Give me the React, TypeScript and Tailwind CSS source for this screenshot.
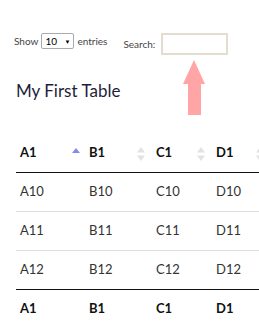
const cols = [
  { key: "A", w: "w-[69px]", sort: "asc", label: true },
  { key: "B", w: "w-[67px]", sort: "both", label: true },
  { key: "C", w: "w-[60px]", sort: "both", label: true },
  { key: "D", w: "w-[59px]", sort: "both", label: true },
  { key: "E", w: "w-[60px]", sort: "both", label: false },
];

const rows = ["10", "11", "12"];

function SortIcon({ kind }: { kind: string }) {
  if (kind === "asc") {
    return (
      <svg width="8" height="6" viewBox="0 0 8 6" className="absolute right-[5px] top-[15px]">
        <polygon points="4,0 8,5 0,5" fill="#8a8ae6" />
      </svg>
    );
  }
  return (
    <svg width="8" height="14" viewBox="0 0 8 14" className="absolute right-[7px] top-[14px]">
      <polygon points="4,0 8,5.5 0,5.5" fill="#e2e2e2" />
      <polygon points="4,14 8,8.5 0,8.5" fill="#e2e2e2" />
    </svg>
  );
}

export default function App() {
  return (
    <div className="relative w-[259px] h-[327px] overflow-hidden bg-white font-['Lato',sans-serif] text-[#333]">
      <div className="flex items-start pt-[33px] pl-[14px]">
        <div className="flex items-center h-[16px] text-[10px] text-[#444]">
          <span>Show</span>
          <div className="mx-[3px] flex items-center justify-between w-[33px] h-[16px] border border-[#aaa] rounded-[2px] px-[3px] text-[10px] text-black">
            <span>10</span>
            <span className="text-[6px]">▼</span>
          </div>
          <span>entries</span>
        </div>
        <div className="ml-[16px] flex items-center h-[22px] text-[10px] text-[#444]">
          <span>Search:</span>
          <div className="ml-[6px] w-[67px] h-[22px] border-2 border-[#e2ddcf] bg-white" />
        </div>
      </div>

      <h1 className="mt-[24px] ml-[16px] text-[17px] leading-[24px] text-[#1e1e3c]">My First Table</h1>

      <table className="mt-[30px] ml-[16px] w-[315px] max-w-none table-fixed border-collapse text-[13px]">
        <thead>
          <tr className="h-[39px] border-b border-[#111]">
            {cols.map((c) => (
              <th key={c.key} className={`${c.w} relative text-left pl-[4px] font-bold text-[#111]`}>
                {c.label ? `${c.key}1` : ""}
                <SortIcon kind={c.sort} />
              </th>
            ))}
          </tr>
        </thead>
        <tbody>
          {rows.map((r, i) => (
            <tr key={r} className={`h-[39px] ${i < rows.length - 1 ? "border-b border-[#ddd]" : ""}`}>
              {cols.map((c) => (
                <td key={c.key} className="pl-[4px] text-[#333]">
                  {c.label ? `${c.key}${r}` : ""}
                </td>
              ))}
            </tr>
          ))}
        </tbody>
        <tfoot>
          <tr className="h-[39px] border-t border-[#111] border-b border-b-[#ddd]">
            {cols.map((c) => (
              <th key={c.key} className="text-left pl-[4px] font-bold text-[#111]">
                {c.label ? `${c.key}1` : ""}
              </th>
            ))}
          </tr>
        </tfoot>
      </table>

      <svg width="22" height="56" viewBox="0 0 22 56" className="absolute left-[183px] top-[60px]">
        <polygon points="11,0 22,24 18,24 18,55 5,55 5,24 0,24" fill="#ffa5a5" />
      </svg>
    </div>
  );
}
